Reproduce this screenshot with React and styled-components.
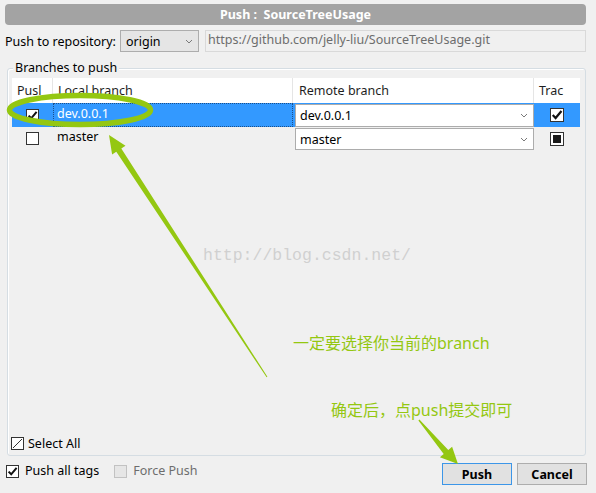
import React from 'react';
import styled, { createGlobalStyle } from 'styled-components';

const GlobalStyle = createGlobalStyle`
  html, body { margin: 0; padding: 0; background: #f0f0f0; }
  body { font-family: "Noto Sans", "Noto Sans CJK SC", sans-serif; }
`;

const UI = `"Noto Sans", "Noto Sans CJK SC", sans-serif`;
const GREEN = '#94c711';

const Window = styled.div`
  position: relative;
  width: 596px;
  height: 493px;
  box-sizing: border-box;
  background: #f0f0f0;
  overflow: hidden;
  display: flex;
  flex-direction: column;
  font-family: ${UI};
  font-size: 12.5px;
  color: #000;
`;

const TitleBar = styled.div`
  margin: 4px 10px 0 5px;
  height: 21px;
  border-radius: 4px;
  background: #a3a3a3;
  color: #fff;
  font-weight: 700;
  font-size: 12.5px;
  display: flex;
  align-items: center;
  justify-content: center;
  white-space: pre;
`;

const RepoRow = styled.div`
  display: flex;
  align-items: center;
  height: 22px;
  margin-top: 5px;
  padding: 0 10px 0 5px;
`;

const RepoLabel = styled.span`
  width: 115px;
  flex: none;
  white-space: nowrap;
`;

const Select = styled.div`
  width: 79px;
  height: 22px;
  box-sizing: border-box;
  flex: none;
  border: 1px solid #adadad;
  background: #e5e5e5;
  display: flex;
  align-items: center;
  justify-content: space-between;
  padding: 0 5px 0 5px;
`;

const UrlBox = styled.div`
  flex: 1;
  height: 22px;
  box-sizing: border-box;
  margin-left: 6px;
  border: 1px solid #d9d9d9;
  background: #f0f0f0;
  color: #6d6d6d;
  padding: 1px 0 0 2px;
  line-height: 16px;
  white-space: nowrap;
`;

const GroupBox = styled.div`
  position: relative;
  margin: 16px 10px 0 7px;
  height: 388px;
  box-sizing: border-box;
  border: 1px solid #d5dde3;
  border-radius: 3px;
  box-shadow: inset 1px 1px 0 #fff;
  padding: 9px 5px 4px 4px;
  display: flex;
  flex-direction: column;
`;

const GroupLabel = styled.span`
  position: absolute;
  top: -9px;
  left: 5px;
  padding: 0 2px;
  line-height: 16px;
  background: #f0f0f0;
`;

const Table = styled.div`
  flex: 1;
  display: grid;
  grid-template-columns: 41px 240px 241px 46px;
  grid-auto-rows: min-content;
  align-content: start;
`;

const HeadCell = styled.div`
  height: 25px;
  background: #fff;
  border-right: ${p => (p.$last ? 'none' : '1px solid #e5e5e5')};
  box-sizing: border-box;
  display: flex;
  align-items: center;
  padding-left: ${p => p.$pad || 5}px;
  color: #1e1e1e;
  white-space: nowrap;
  overflow: hidden;
`;

const Cell = styled.div`
  height: ${p => p.$h}px;
  box-sizing: border-box;
  background: ${p => (p.$sel ? '#3399ff' : 'transparent')};
  color: ${p => (p.$sel ? '#fff' : '#000')};
  display: flex;
  align-items: center;
  justify-content: ${p => (p.$center ? 'center' : 'flex-start')};
  padding-left: ${p => p.$pad || 0}px;
  padding-bottom: ${p => p.$pb || 0}px;
  outline: ${p => (p.$focus ? '1px dotted #1b4f8a' : 'none')};
  outline-offset: -1px;
  white-space: nowrap;
`;

const Combo = styled.div`
  align-self: stretch;
  flex: 1;
  margin: 1px 0 0 2px;
  background: #fff;
  border: 1px solid #acacac;
  box-sizing: border-box;
  display: flex;
  align-items: center;
  justify-content: space-between;
  padding: 0 5px 0 4px;
  color: #000;
`;

const Box = styled.span`
  width: ${p => p.$size}px;
  height: ${p => p.$size}px;
  box-sizing: border-box;
  flex: none;
  border: 1px solid ${p => (p.$disabled ? '#c2c2c2' : '#333')};
  background: ${p => (p.$disabled ? '#e6e6e6' : '#fff')};
  display: flex;
  align-items: center;
  justify-content: center;
  margin-top: ${p => p.$mt || 0}px;
`;

const MixedDot = styled.span`
  width: 8px;
  height: 8px;
  background: #1a1a1a;
`;

const Check = ({ size = 13, kind = 'empty', mt, disabled }) => (
  <Box $size={size} $mt={mt} $disabled={disabled}>
    {kind === 'checked' && (
      <svg width={size - 2} height={size - 2} viewBox="0 0 11 11">
        <path d="M1.6 5.6 L4.2 8.3 L9.6 1.8" fill="none" stroke="#111" strokeWidth="2" />
      </svg>
    )}
    {kind === 'mixed' && <MixedDot />}
    {kind === 'slash' && (
      <svg width={size - 2} height={size - 2} viewBox="0 0 11 11">
        <path d="M1 10 L10 1" fill="none" stroke="#333" strokeWidth="1" />
      </svg>
    )}
  </Box>
);

const Chevron = () => (
  <svg width="8" height="5" viewBox="0 0 8 5">
    <path d="M1 1 L4 4 L7 1" fill="none" stroke="#7a7a7a" strokeWidth="1" />
  </svg>
);

const SelectAllRow = styled.div`
  display: flex;
  align-items: center;
  gap: 4px;
  height: 16px;
  margin-left: -1px;
`;

const BottomRow = styled.div`
  display: flex;
  align-items: flex-start;
  height: 22px;
  margin-top: 7px;
  padding: 0 9px 0 6px;
`;

const CheckLabel = styled.label`
  display: flex;
  align-items: center;
  gap: 6px;
  height: 15px;
  margin-left: ${p => p.$ml || 0}px;
  color: ${p => (p.$disabled ? '#6d6d6d' : '#000')};
  white-space: nowrap;
`;

const Button = styled.button`
  width: 70px;
  height: 22px;
  margin-left: ${p => p.$ml};
  border: 1px solid ${p => (p.$focus ? '#3c96e8' : '#adadad')};
  background: #e1e1e1;
  font-family: ${UI};
  font-size: 12.5px;
  font-weight: 700;
  color: #000;
  padding: 0;
`;

const Overlay = styled.svg`
  position: absolute;
  left: 0;
  top: 0;
  pointer-events: none;
`;

const Watermark = styled.span`
  position: absolute;
  left: 203px;
  top: 246px;
  font-family: "Liberation Mono", monospace;
  font-size: 16.5px;
  line-height: 20px;
  color: #d0d0d0;
  white-space: nowrap;
`;

const Note = styled.span`
  position: absolute;
  left: ${p => p.$x}px;
  top: ${p => p.$y}px;
  font-family: "Noto Sans", "Noto Sans CJK SC", sans-serif;
  font-size: 16px;
  line-height: 20px;
  color: ${GREEN};
  white-space: nowrap;
`;

export default function App() {
  return (
    <>
      <GlobalStyle />
      <Window>
        <TitleBar>Push :  SourceTreeUsage</TitleBar>
        <RepoRow>
          <RepoLabel>Push to repository:</RepoLabel>
          <Select>
            <span>origin</span>
            <Chevron />
          </Select>
          <UrlBox>https://github.com/jelly-liu/SourceTreeUsage.git</UrlBox>
        </RepoRow>

        <GroupBox>
          <GroupLabel>Branches to push</GroupLabel>
          <Table>
            <HeadCell>Pusl</HeadCell>
            <HeadCell>Local branch</HeadCell>
            <HeadCell $pad={6}>Remote branch</HeadCell>
            <HeadCell $last>Trac</HeadCell>

            <Cell $h={24} $sel $center><Check kind="checked" /></Cell>
            <Cell $h={24} $sel $focus $pad={4} $pb={3}>dev.0.0.1</Cell>
            <Cell $h={24} $sel><Combo><span>dev.0.0.1</span><Chevron /></Combo></Cell>
            <Cell $h={24} $sel $center><Check size={14} kind="checked" /></Cell>

            <Cell $h={23} $center><Check /></Cell>
            <Cell $h={23} $pad={4} $pb={4}>master</Cell>
            <Cell $h={23}><Combo><span>master</span><Chevron /></Combo></Cell>
            <Cell $h={23} $center><Check size={14} kind="mixed" /></Cell>
          </Table>
          <SelectAllRow>
            <Check kind="slash" />
            <span>Select All</span>
          </SelectAllRow>
        </GroupBox>

        <BottomRow>
          <CheckLabel>
            <Check kind="checked" mt={1} />
            <span>Push all tags</span>
          </CheckLabel>
          <CheckLabel $ml={15} $disabled>
            <Check disabled mt={1} />
            <span>Force Push</span>
          </CheckLabel>
          <Button $ml="auto" $focus>Push</Button>
          <Button $ml="5px">Cancel</Button>
        </BottomRow>

        <Watermark>http://blog.csdn.net/</Watermark>
        <Note $x={293} $y={333}>一定要选择你当前的branch</Note>
        <Note $x={331} $y={400}>确定后，点push提交即可</Note>

        <Overlay width="596" height="493" viewBox="0 0 596 493">
          <ellipse cx="80" cy="110" rx="70.5" ry="14.5" fill="none" stroke={GREEN} strokeWidth="5.5" />
          <polygon
            fill={GREEN}
            points="109,135 125.5,145.7 121.3,148.5 267.4,376.7 266.6,377.3 116.3,151.7 112.1,154.5"
          />
          <polygon
            fill={GREEN}
            points="458,464 452.1,446.8 448.3,450.1 419.4,419.4 418.4,420.4 443.7,453.9 439.9,457.2"
          />
        </Overlay>
      </Window>
    </>
  );
}
